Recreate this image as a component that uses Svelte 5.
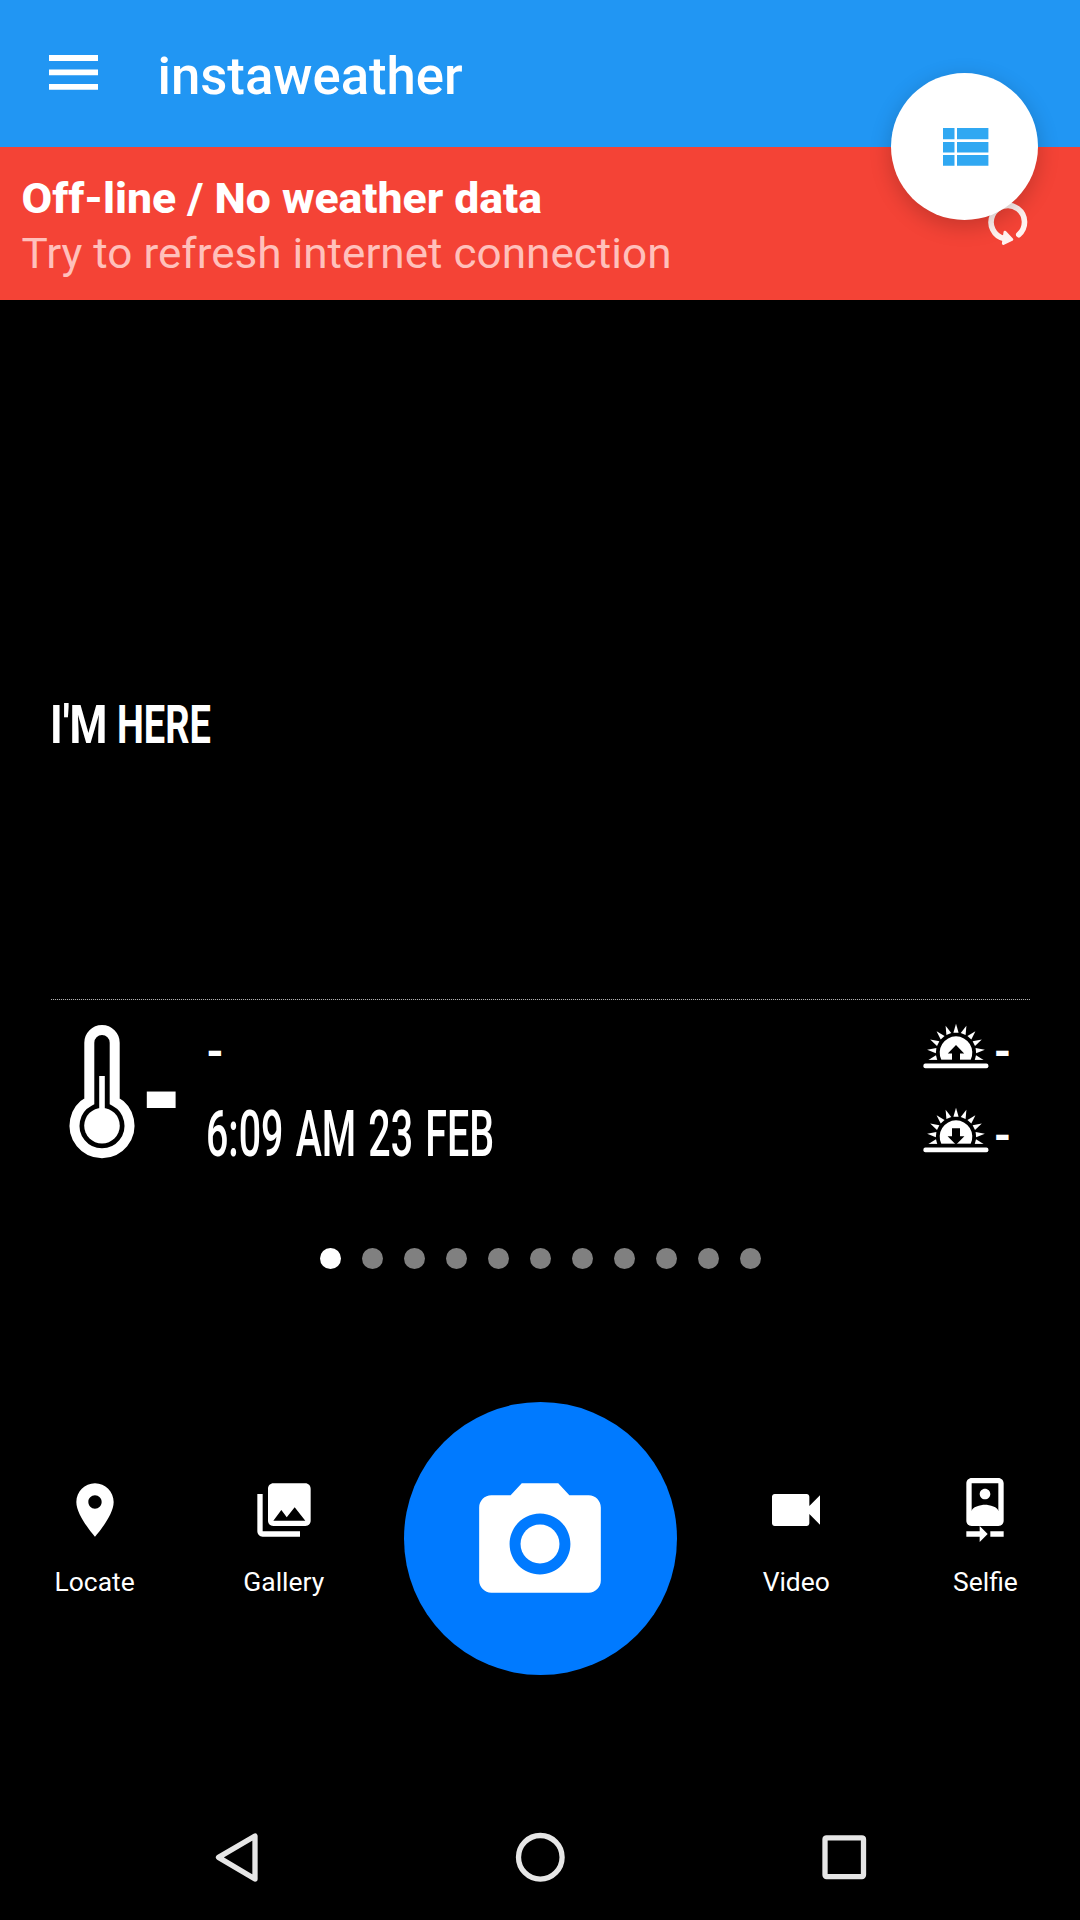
<script>
  const dots = Array.from({ length: 11 }, (_, i) => i);
  const rays = Array.from({ length: 11 }, (_, i) => (i - 5) * 21);
  const left = [
    {
      label: 'Locate',
      icon: 'M12 2C8.13 2 5 5.13 5 9c0 5.25 7 13 7 13s7-7.75 7-13c0-3.87-3.13-7-7-7zm0 9.5c-1.38 0-2.5-1.12-2.5-2.5s1.12-2.5 2.5-2.5 2.5 1.12 2.5 2.5-1.12 2.5-2.5 2.5z'
    },
    {
      label: 'Gallery',
      icon: 'M22 16V4c0-1.1-.9-2-2-2H8c-1.1 0-2 .9-2 2v12c0 1.1.9 2 2 2h12c1.1 0 2-.9 2-2zm-11-4l2.03 2.71L16 11l4 5H8l3-4zM2 6v14c0 1.1.9 2 2 2h14v-2H4V6H2z'
    }
  ];
  const right = [
    {
      label: 'Video',
      icon: 'M17 10.5V7c0-.55-.45-1-1-1H4c-.55 0-1 .45-1 1v10c0 .55.45 1 1 1h12c.55 0 1-.45 1-1v-3.5l4 4v-11l-4 4z'
    },
    {
      label: 'Selfie',
      icon: 'M10 20H5v2h5v2l3-3-3-3v2zm4 0v2h5v-2h-5zm-2-12c1.1 0 2-.9 2-2s-.9-2-2-2-1.99.9-1.99 2S10.9 8 12 8zm5-8H7C5.9 0 5 .9 5 2v14c0 1.1.9 2 2 2h10c1.1 0 2-.9 2-2V2c0-1.1-.9-2-2-2zM7 2h10v10.5c0-1.67-3.33-2.5-5-2.5s-5 .83-5 2.5V2z'
    }
  ];
</script>

{#snippet action(item)}
  <button class="action">
    <svg width="64" height="64" viewBox="0 0 24 24"><path d={item.icon} /></svg>
    <span>{item.label}</span>
  </button>
{/snippet}

{#snippet sun(down)}
  <div class="sun">
    <svg width="66" height="48" viewBox="0 0 66 48">
      {#each rays as angle}
        <path d="M30.4 12.7L33 3.7L35.6 12.7Z" transform="rotate({angle} 33 32.7)" />
      {/each}
      <path d="M18.3 39.7A16.3 16.3 0 1 1 47.7 39.7Z" />
      {#if down}
        <path class="cut" d="M29 24.3h8v8h4.4l-8.4 8.4-8.4-8.4H29z" />
      {:else}
        <path class="cut" d="M33 25l8.2 8.5H37V40h-8v-6.5h-4.2z" />
      {/if}
      <rect class="ground" x="0" y="39.9" width="66" height="3.2" />
      <rect x=".4" y="43.5" width="65" height="4.7" rx="2" />
    </svg>
    <svg class="dash" width="20" height="60" viewBox="-3 -20 20 60">
      <text class="bold" x="-2.3" y="31.7" font-size="46" textLength="17.5" lengthAdjust="spacingAndGlyphs">-</text>
    </svg>
  </div>
{/snippet}

<div class="screen">
  <header>
    <svg class="menu" width="49" height="35" viewBox="0 0 49 35">
      <path d="M0 0h49v6H0zM0 14.5h49v5.7H0zM0 29h49v5.7H0z" />
    </svg>
    <h1>instaweather</h1>
    <button class="fab" aria-label="Skins">
      <svg width="46" height="38" viewBox="0 0 46 38">
        <path d="M0 0h11.5v11.3H0zM14 0h31.4v11.3H14zM0 14h11.5v10.6H0zM14 14h31.4v10.6H14zM0 27h11.5v10.8H0zM14 27h31.4v10.8H14z" />
      </svg>
    </button>
  </header>

  <section class="banner">
    <svg class="message" width="680" height="153" viewBox="0 0 680 153">
      <text class="heavy" x="21.5" y="66.3" font-size="43" textLength="520.5" lengthAdjust="spacingAndGlyphs">Off-line / No weather data</text>
      <text class="soft" x="21.5" y="121.3" font-size="42.5" textLength="650" lengthAdjust="spacingAndGlyphs">Try to refresh internet connection</text>
    </svg>
    <svg class="refresh" width="44" height="46" viewBox="0 0 44 46">
      <path class="arc" d="M18 38.4A16.7 16.7 0 1 1 32.8 34.7" />
      <path class="tip" d="M19 32.2L25.8 39.5L17.4 43.4Z" />
    </svg>
  </section>

  <main>
    <svg class="place" width="200" height="80" viewBox="0 -10 200 80">
      <text class="bold" y="52.5" font-size="54.5"><tspan x="-2" textLength="57.5" lengthAdjust="spacingAndGlyphs">I'M</tspan> <tspan x="65" textLength="94" lengthAdjust="spacingAndGlyphs">HERE</tspan></text>
    </svg>
    <div class="rule"></div>
    <div class="weather">
      <svg class="thermo" width="66" height="134" viewBox="0 0 66 134">
        <path class="tube" d="M20.3 76.3V17.7a12.7 12.7 0 0 1 25.4 0v58.6a27.5 27.5 0 1 1-25.4 0z" />
        <circle cx="33" cy="100.7" r="17.8" />
        <path d="M30.2 51h5.6v34h-5.6z" />
      </svg>
      <svg class="temp" width="46" height="200" viewBox="-9 -33 46 200">
        <text class="bold" x="-7" y="120" font-size="148" textLength="41" lengthAdjust="spacingAndGlyphs">-</text>
      </svg>
      <svg class="when" width="310" height="160" viewBox="-5 0 310 160">
        <text class="bold" x="-2.8" y="42.6" font-size="46" textLength="17.5" lengthAdjust="spacingAndGlyphs">-</text>
        <text class="time" x="-3" y="130.7" font-size="65" textLength="288" lengthAdjust="spacingAndGlyphs">6:09 AM 23 FEB</text>
      </svg>
      <div class="suns">
        {@render sun(false)}
        {@render sun(true)}
      </div>
    </div>
  </main>

  <div class="pager">
    {#each dots as d}
      <i class:active={d === 0}></i>
    {/each}
  </div>

  <section class="actions">
    {#each left as item}{@render action(item)}{/each}
    <button class="shutter" aria-label="Take photo">
      <svg width="146" height="146" viewBox="0 0 24 24">
        <circle cx="12" cy="12" r="3.2" />
        <path d="M9 2L7.17 4H4c-1.1 0-2 .9-2 2v12c0 1.1.9 2 2 2h16c1.1 0 2-.9 2-2V6c0-1.1-.9-2-2-2h-3.17L15 2H9zm3 15c-2.76 0-5-2.24-5-5s2.24-5 5-5 5 2.24 5 5-2.24 5-5 5z" />
      </svg>
    </button>
    {#each right as item}{@render action(item)}{/each}
  </section>

  <nav>
    <svg width="48" height="54" viewBox="0 0 48 54"><path d="M5.5 27.4L42 6V49Z" /></svg>
    <svg width="54" height="54" viewBox="0 0 54 54"><circle cx="27.3" cy="27.3" r="21.8" /></svg>
    <svg width="50" height="54" viewBox="0 0 50 54"><rect x="5" y="7.8" width="38.5" height="38.8" rx="1.5" /></svg>
  </nav>
</div>

<style>
  :global(body) { background: #000; }
  .screen {
    width: 1080px;
    height: 1920px;
    background: #000;
    color: #fff;
    font-family: Roboto, "Liberation Sans", sans-serif;
    display: flex;
    flex-direction: column;
    overflow: hidden;
  }
  svg { display: block; flex: none; fill: #fff; overflow: visible; }
  button { border: 0; padding: 0; margin: 0; background: none; color: inherit; font: inherit; }

  header {
    position: relative;
    height: 147px;
    flex: none;
    background: #2196f3;
    display: flex;
    align-items: flex-start;
    padding-left: 49px;
  }
  .menu { margin-top: 55px; }
  h1 { margin: 45px 0 0 59.5px; font-size: 52.7px; line-height: 63px; font-weight: 500; }
  .fab {
    position: absolute;
    left: 891px;
    top: 73px;
    width: 147px;
    height: 147px;
    border-radius: 50%;
    background: #fff;
    box-shadow: 0 6px 22px rgba(0, 0, 0, .2);
    display: flex;
    align-items: center;
    justify-content: center;
    z-index: 1;
    padding-left: 3px;
  }
  .fab svg { fill: #30a8f2; }

  .banner {
    height: 153px;
    flex: none;
    background: #f44336;
    display: flex;
    justify-content: space-between;
    padding-right: 50px;
  }
  .refresh { margin-top: 53px; }
  .arc { fill: none; stroke: #fff2f0; stroke-width: 5.6; stroke-linecap: round; }
  .tip { fill: #fff2f0; stroke: #fff2f0; stroke-width: 3; stroke-linejoin: round; }
  .heavy { font-weight: 800; }
  .bold { font-weight: 700; }
  .time { font-weight: 500; word-spacing: 4px; }
  .soft { font-weight: 400; fill: #ffc0bb; }

  main { height: 900px; flex: none; padding: 380px 50px 0 51px; box-sizing: border-box; }
  .place { margin-left: 1px; }
  .rule {
    margin-top: 239px;
    height: 1px;
    background: repeating-linear-gradient(90deg, #b0b0b0 0 1px, #111 1px 2px);
  }
  .weather { display: flex; align-items: flex-start; padding: 25px 17px 0 17.7px; }
  .tube { fill: none; stroke: #fff; stroke-width: 10; }
  .temp { margin: -33px 0 0 4px; }
  .when { margin-left: 19px; }
  .suns { margin-left: auto; margin-top: -5px; display: flex; flex-direction: column; gap: 36px; }
  .sun { display: flex; gap: 4px; height: 48px; }
  .cut, .ground { fill: #000; }
  .dash { margin-top: -4px; }

  .pager { margin-top: 48px; display: flex; justify-content: center; gap: 21px; height: 21px; flex: none; }
  .pager i { width: 21px; height: 21px; border-radius: 50%; background: #808080; }
  .pager .active { background: #fff; }

  .actions {
    margin-top: 133px;
    height: 273px;
    flex: none;
    display: grid;
    grid-template-columns: 189.2px 189.2px 1fr 189.2px 189.2px;
  }
  .action {
    display: flex;
    flex-direction: column;
    align-items: center;
    padding-top: 76.4px;
    justify-content: flex-start;
    font-size: 26.4px;
    line-height: 32px;
  }
  .action span { margin-top: 23.6px; }
  .shutter {
    width: 273px;
    height: 273px;
    justify-self: center;
    border-radius: 50%;
    background: #007aff;
    display: flex;
    align-items: center;
    justify-content: center;
    padding-top: 11px;
    box-sizing: border-box;
  }

  nav { margin-top: 155px; height: 54px; display: flex; padding-left: 213px; }
  nav svg { fill: none; stroke: #e6e6e6; stroke-width: 5.3; stroke-linejoin: round; }
  nav svg:nth-child(2) { margin-left: 252px; }
  nav svg:nth-child(3) { margin-left: 253px; }
</style>
